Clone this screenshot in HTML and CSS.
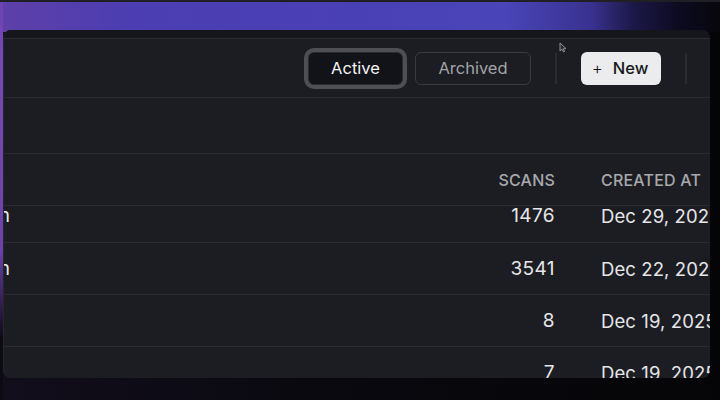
FILE: index.html
```html
<!DOCTYPE html>
<html>
<head>
<meta charset="utf-8">
<link rel="stylesheet" href="styles.css">
</head>
<body>
<div class="stage">
  <div class="panel">
    <div class="topstrip"></div>
    <div class="toolbar">
      <div class="seg">
        <button class="btn active">Active</button>
        <button class="btn ghost">Archived</button>
      </div>
      <span class="vsep"></span>
      <button class="btn primary"><span class="plus">+</span>New</button>
      <span class="vsep"></span>
      <svg class="cursor" width="8" height="11" viewBox="0 0 8 11"><path d="M1 1 L1 9 L3 7.2 L4.6 10 L5.6 9.4 L4.2 6.8 L7 6.6 Z" fill="#2a2b30" stroke="#9a9aa0" stroke-width="0.9" stroke-linejoin="round"/></svg>
    </div>
    <div class="row empty"></div>
    <div class="row head">
      <div class="name"></div>
      <div class="fill"></div>
      <div class="scans">Scans</div>
      <div class="created">Created at</div>
    </div>
    <div class="row data first">
      <div class="name"><span>Main scan</span></div>
      <div class="fill"></div>
      <div class="scans">1476</div>
      <div class="created">Dec 29, 2025</div>
    </div>
    <div class="row data">
      <div class="name"><span>Weekly scan</span></div>
      <div class="fill"></div>
      <div class="scans">3541</div>
      <div class="created">Dec 22, 2025</div>
    </div>
    <div class="row data">
      <div class="name"></div>
      <div class="fill"></div>
      <div class="scans">8</div>
      <div class="created">Dec 19, 2025</div>
    </div>
    <div class="row data last">
      <div class="name"></div>
      <div class="fill"></div>
      <div class="scans">7</div>
      <div class="created">Dec 19, 2025</div>
    </div>
  </div>
</div>
</body>
</html>
```
FILE: styles.css
```css
* { box-sizing: border-box; }
html, body { margin: 0; padding: 0; }
body {
  width: 720px;
  height: 400px;
  overflow: hidden;
  background: #07070c;
  font-family: Inter, "Liberation Sans", sans-serif;
}
.stage {
  width: 720px;
  height: 400px;
  padding: 30px 10px 22px 3px;
  background:
    linear-gradient(to bottom, #1f1f24 0, #1f1f24 2px, transparent 2px),
    linear-gradient(to bottom, #6a44b0 0, #7a47b6 60px, #6a42ac 250px, #2a1a44 310px, #0c0a12 340px) left top / 3px 100% no-repeat,
    linear-gradient(to right, #5e40a8 0, #4c3db2 18%, #4a40b6 50%, #4a45b8 70%, #3a3290 82%, #1c1848 88%, #0d0b22 94%, #07070c 100%) left top / 100% 32px no-repeat,
    linear-gradient(to right, #120e1c 0, #0a0910 40%, #050507 100%);
}
.panel {
  position: relative;
  width: 707px;
  height: 348px;
  background: #1c1d22;
  border-radius: 8px;
  overflow: hidden;
  border-left: 1px solid #26272c;
  color: #e9e9ec;
}
.topstrip {
  height: 9px;
  background: #15161b;
  border-bottom: 1px solid #2a2b30;
}
.toolbar {
  height: 59px;
  display: flex;
  align-items: center;
  justify-content: flex-end;
  gap: 24px;
  padding-right: 23px;
  border-bottom: 1px solid #2a2b30;
  position: relative;
}
.seg { display: flex; gap: 12px; align-items: center; }
.btn {
  height: 33px;
  border-radius: 6px;
  font-family: Inter, "Liberation Sans", sans-serif;
  font-size: 16.5px;
  font-weight: 400;
  padding: 0;
  display: flex;
  align-items: center;
  justify-content: center;
  border: 1px solid transparent;
}
.btn.active {
  width: 95px;
  background: #121318;
  color: #f4f4f6;
  border-color: #2a2b30;
  box-shadow: 0 0 0 4px #4e4f54;
}
.btn.ghost {
  width: 116px;
  background: transparent;
  color: #a3a3a8;
  border-color: #3a3b40;
}
.btn.primary {
  width: 80px;
  background: #ececee;
  color: #17181c;
  font-weight: 500;
  gap: 10px;
  padding-right: 2px;
}
.plus { font-weight: 300; font-size: 17px; }
.vsep {
  width: 2px;
  height: 31px;
  background: #2a2b30;
}
.cursor {
  position: absolute;
  left: 555px;
  top: 3px;
}
.row {
  display: flex;
  align-items: center;
  border-bottom: 1px solid #2a2b30;
  height: 52px;
}
.row.empty { height: 56px; }
.row.head { height: 52px; }
.row.data.first { height: 37px; align-items: flex-start; }
.row.data.first > div { margin-top: -1px; }
.row.last { border-bottom: none; align-items: flex-start; padding-top: 15px; }
.name {
  width: 6px;
  display: flex;
  justify-content: flex-end;
  white-space: nowrap;
  font-size: 19px;
  line-height: 22px;
}
.fill { flex: 1; }
.scans {
  width: 120px;
  text-align: right;
  font-size: 19px;
  letter-spacing: 0.4px;
  line-height: 22px;
  white-space: nowrap;
}
.created {
  width: 155px;
  padding-left: 46px;
  font-size: 18.5px;
  letter-spacing: 0.1px;
  line-height: 22px;
  white-space: nowrap;
}
.head .scans, .head .created {
  text-transform: uppercase;
  font-size: 16px;
  font-weight: 500;
  color: #a8a8ad;
  letter-spacing: 0.2px;
}
.data .scans, .data .created { color: #e6e6e9; }
```
